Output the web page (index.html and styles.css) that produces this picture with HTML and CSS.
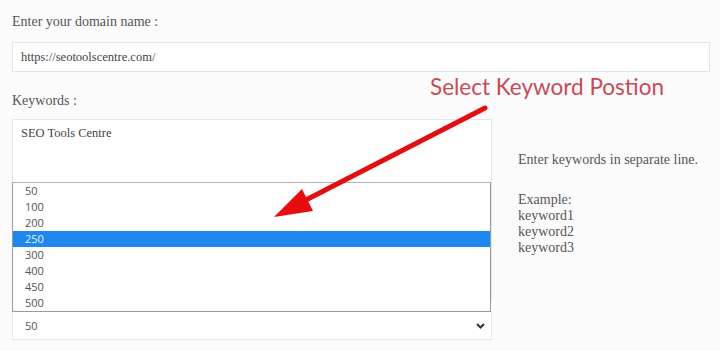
FILE: index.html
```html
<!DOCTYPE html>
<html lang="en">
<head>
    <meta charset="utf-8">
    <title>Keyword Position Checker</title>
    <link rel="stylesheet" href="styles.css">
</head>
<body>

<div class="kp-form">
    <div class="kp-label">Enter your domain name :</div>
    <div class="kp-input">https://seotoolscentre.com/</div>

    <div class="kp-label kp-label-kw">Keywords :</div>

    <div class="kp-row">
        <div class="kp-left">
            <div class="kp-textarea">SEO Tools Centre</div>
            <div class="kp-select">
                <span>50</span>
                <svg class="kp-chevron" width="9" height="6" viewBox="0 0 9 6"><path d="M1 1 L4.5 4.5 L8 1" fill="none" stroke="#333" stroke-width="2"/></svg>
            </div>

            <ul class="kp-listbox">
                <li>50</li>
                <li>100</li>
                <li>200</li>
                <li class="selected">250</li>
                <li>300</li>
                <li>400</li>
                <li>450</li>
                <li>500</li>
            </ul>
        </div>

        <div class="kp-help">
            <p>Enter keywords in separate line.</p>
            <p>Example:<br />keyword1<br />keyword2<br />keyword3</p>
        </div>
    </div>
</div>

<!-- annotation over the screenshot -->
<div class="kp-note">Select Keyword Postion</div>
<svg class="kp-arrow" width="720" height="351" viewBox="0 0 720 351">
    <line x1="485" y1="108" x2="300" y2="203" stroke="#e50d0d" stroke-width="5" stroke-linecap="round"/>
    <polygon points="274,217 302,189 313,211" fill="#e50d0d"/>
</svg>

</body>
</html>
```

FILE: styles.css
```css
body {
    margin:0;
    background:#fbfbfc;
    font-family:"Liberation Serif", serif;
    color:#555;
}

.kp-form {
    padding:14px 10px 0 12px;
}

.kp-label {
    font-size:14px;
    line-height:16px;
}

.kp-label-kw {
    margin-top:21px;
}

.kp-input {
    margin-top:12px;
    width:688px;
    height:28px;
    line-height:28px;
    padding:0 0 0 8px;
    background:#fff;
    border:1px solid #dce8ef;
    font-size:12.5px;
    color:#444;
}

.kp-row {
    display:flex;
    margin-top:10px;
}

.kp-left {
    position:relative;
    width:480px;
}

.kp-textarea {
    height:168px;
    padding:6px 8px;
    background:#fff;
    border:1px solid #dce8ef;
    font-size:12.5px;
    color:#444;
}

.kp-select {
    margin-top:10px;
    height:27px;
    display:flex;
    align-items:center;
    justify-content:space-between;
    padding:0 6px 0 12px;
    background:#fff;
    border:1px solid #e4e9ec;
    font:11px "Open Sans", sans-serif;
    color:#555;
}

.kp-listbox {
    position:absolute;
    top:63px;
    left:0;
    width:477px;
    margin:0;
    padding:0;
    list-style:none;
    background:#fff;
    border:1px solid #9a9a9a;
    border-top-color:#b0b0b0;
    font:11px "Open Sans", sans-serif;
    color:#555;
}

.kp-listbox li {
    height:16px;
    line-height:15px;
    padding-left:12px;
}

.kp-listbox li.selected {
    background:#1e88f0;
    color:#e8f2ff;
}

.kp-help {
    padding:33px 0 0 26px;
    font-size:14px;
    line-height:16px;
    color:#555;
}

.kp-help p {
    margin:0 0 24px;
}

.kp-note {
    position:absolute;
    top:73px;
    left:430px;
    font:22.5px Lato, "Open Sans", sans-serif;
    color:#c94a55;
}

.kp-arrow {
    position:absolute;
    top:0;
    left:0;
}
```
